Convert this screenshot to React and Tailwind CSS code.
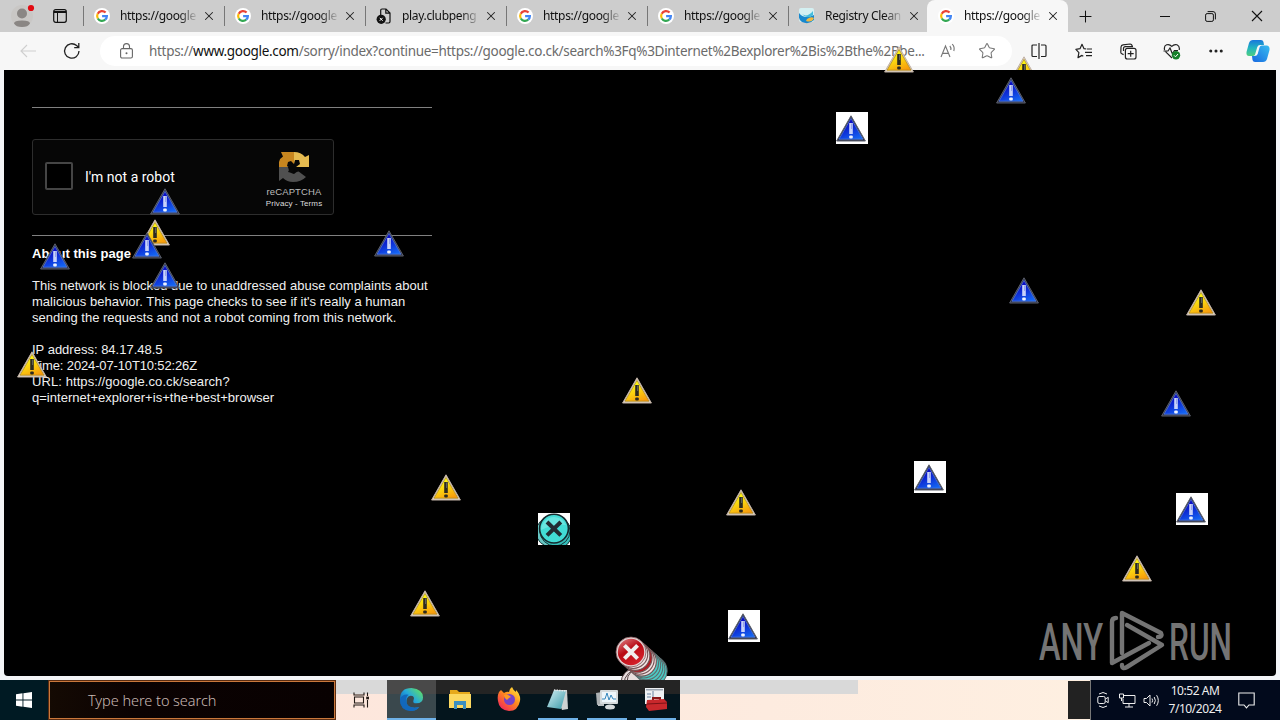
import { X, Plus, Star, Ellipsis } from 'lucide-react'

const tabs = [
  { title: 'https://google', icon: 'google' },
  { title: 'https://google', icon: 'google' },
  { title: 'play.clubpeng', icon: 'file' },
  { title: 'https://google', icon: 'google' },
  { title: 'https://google', icon: 'google' },
  { title: 'Registry Clean', icon: 'registry' },
]

// Icons dragged over the desktop, top left corner of each
const pins = [
  { kind: 'yellow', x: 884, y: 46 },
  { kind: 'blue', x: 996, y: 77 },
  { kind: 'blue', x: 150, y: 188 },
  { kind: 'yellow', x: 140, y: 219 },
  { kind: 'blue', x: 132, y: 232 },
  { kind: 'blue', x: 40, y: 243 },
  { kind: 'blue', x: 374, y: 230 },
  { kind: 'blue', x: 150, y: 262 },
  { kind: 'yellow', x: 17, y: 351 },
  { kind: 'blue', x: 1009, y: 277 },
  { kind: 'yellow', x: 1186, y: 289 },
  { kind: 'blue', x: 1161, y: 390 },
  { kind: 'yellow', x: 622, y: 377 },
  { kind: 'yellow', x: 431, y: 474 },
  { kind: 'yellow', x: 726, y: 489 },
  { kind: 'yellow', x: 410, y: 590 },
  { kind: 'yellow', x: 1122, y: 555 },
]

const boxedPins = [
  { x: 836, y: 112 },
  { x: 914, y: 461 },
  { x: 1176, y: 493 },
  { x: 728, y: 610 },
]

function Gradients() {
  return (
    <svg width="0" height="0" className="absolute">
      <defs>
        <linearGradient id="yellow" x1="0.3" y1="0" x2="0.8" y2="1">
          <stop offset="0.2" stopColor="#fdf412" />
          <stop offset="1" stopColor="#f7980c" />
        </linearGradient>
        <linearGradient id="blue" x1="0.3" y1="0" x2="0.8" y2="1">
          <stop offset="0.2" stopColor="#0a0cc4" />
          <stop offset="1" stopColor="#1468f4" />
        </linearGradient>
        <linearGradient id="red" x1="0" y1="0" x2="0.6" y2="1">
          <stop offset="0" stopColor="#e0888c" />
          <stop offset="0.5" stopColor="#b80a14" />
          <stop offset="1" stopColor="#d4202a" />
        </linearGradient>
        <linearGradient id="edge" x1="0" y1="1" x2="1" y2="0">
          <stop offset="0.2" stopColor="#0c62b8" />
          <stop offset="0.55" stopColor="#25a8dc" />
          <stop offset="0.9" stopColor="#5ddc6c" />
        </linearGradient>
        <linearGradient id="fox" x1="1" y1="0" x2="0.2" y2="1">
          <stop offset="0.1" stopColor="#ffe23a" />
          <stop offset="0.5" stopColor="#ff8a1e" />
          <stop offset="1" stopColor="#f0225e" />
        </linearGradient>
        <linearGradient id="copilotA" x1="0" y1="0" x2="0" y2="1">
          <stop offset="0" stopColor="#1877dc" />
          <stop offset="0.5" stopColor="#22b5c0" />
          <stop offset="1" stopColor="#50ce80" />
        </linearGradient>
        <linearGradient id="copilotB" x1="1" y1="0" x2="0" y2="1">
          <stop offset="0" stopColor="#38bdf0" />
          <stop offset="1" stopColor="#1868e0" />
        </linearGradient>
        <linearGradient id="pad" x1="0" y1="0" x2="1" y2="1">
          <stop offset="0" stopColor="#d6f0f4" />
          <stop offset="1" stopColor="#3899a8" />
        </linearGradient>
      </defs>
    </svg>
  )
}

function Warning({ kind }) {
  const yellow = kind === 'yellow'
  return (
    <svg width="30" height="27" viewBox="0 0 30 27" className="block">
      <path d="M15 0.8 L29.4 26 H0.6 Z" fill={yellow ? '#e0d6c8' : '#2c3048'} stroke={yellow ? '#c0b0a4' : '#5c606c'} strokeWidth="1" strokeLinejoin="round" />
      <path d="M15 3.4 L27 24.2 H3 Z" fill={yellow ? 'url(#yellow)' : 'url(#blue)'} stroke={yellow ? '#a8841c' : '#5a80dc'} strokeWidth="0.7" />
      <path d="M13.2 8 H16.8 V19 H13.2 Z" fill={yellow ? '#2c2a20' : '#c8d2fa'} />
      <path d="M15 8.5 H16.2 V14 H15 Z" fill={yellow ? '#606058' : '#94a4ec'} />
      <rect x="13.2" y="20.4" width="3.6" height="3" rx="1" fill={yellow ? '#2c2a20' : '#ecf2ff'} />
    </svg>
  )
}

function TealError() {
  return (
    <svg width="32" height="32" viewBox="0 0 32 32" className="block">
      <rect width="32" height="32" fill="#fff" />
      <g fill="#35bdb9" stroke="#173436" strokeWidth="1">
        <circle cx="19" cy="20.5" r="15" />
        <circle cx="13" cy="19" r="15" fill="#67c7c4" />
        <circle cx="17" cy="18" r="15" />
      </g>
      <circle cx="16" cy="15.6" r="14.4" fill="#42dcd5" stroke="#152a2e" strokeWidth="1.6" />
      <path d="M3 17 A13 13 0 0 1 28 12 Q15 11 3 17Z" fill="#68e5df" />
      <path d="M9 9 L22.8 22.4 M22.8 9 L9 22.4" stroke="#232b32" strokeWidth="4" />
    </svg>
  )
}

function ErrorTrail() {
  const steps = [10, 9, 8, 7, 6, 5, 4, 3, 2, 1]
  return (
    <svg width="60" height="45" viewBox="0 0 60 45" className="block">
      <g fill="#e8dede" stroke="#5a4446" strokeWidth="1">
        <circle cx="21" cy="48" r="15" />
        <circle cx="24" cy="49" r="15" />
        <circle cx="27" cy="47" r="15" />
      </g>
      {steps.map((n) => (
        <circle
          key={n}
          cx={16 + n * 2.15}
          cy={17 + n * 1.9}
          r="14.6"
          fill={n > 5 ? '#4ccac4' : n % 3 === 0 ? '#b81820' : '#efe0e0'}
          stroke={n > 5 ? '#5c6c6e' : '#715254'}
          strokeWidth="1.1"
        />
      ))}
      <circle cx="16" cy="17" r="15" fill="#e3d7d7" stroke="#7d5358" strokeWidth="0.8" />
      <circle cx="16" cy="17" r="13.2" fill="url(#red)" />
      <path d="M9.4 10.4 L22.6 23.6 M22.6 10.4 L9.4 23.6" stroke="#f0eeee" strokeWidth="4" />
    </svg>
  )
}

function GoogleIcon() {
  return (
    <svg width="16" height="16" viewBox="0 0 16 16">
      <circle cx="8" cy="8" r="8" fill="#fff" />
      <g fill="none" strokeWidth="2.2">
        <path d="M11.6 4.6 A4.9 4.9 0 0 0 3.7 5.7" stroke="#ea4335" />
        <path d="M3.7 5.7 A4.9 4.9 0 0 0 3.8 10.5" stroke="#fbbc05" />
        <path d="M3.8 10.5 A4.9 4.9 0 0 0 11.2 11.7" stroke="#34a853" />
        <path d="M11.2 11.7 A4.9 4.9 0 0 0 12.9 8.1 H8.1" stroke="#4285f4" />
      </g>
    </svg>
  )
}

function TabIcon({ icon }) {
  if (icon === 'google') return <GoogleIcon />
  if (icon === 'file') {
    return (
      <svg width="16" height="16" viewBox="0 0 16 16">
        <path d="M4.7 7 V2.2 Q4.7 1 6 1 H10 L14 5 V13.6 Q14 15 12.7 15 H9.5 M9.8 1 V5.2 H14" fill="none" stroke="#111" strokeWidth="1.2" />
        <circle cx="5.2" cy="11.3" r="4.6" fill="#111" />
        <path d="M3.7 9.8 L6.7 12.8 M6.7 9.8 L3.7 12.8" stroke="#fff" strokeWidth="1" />
      </svg>
    )
  }
  return (
    <svg width="17" height="16" viewBox="0 0 17 16">
      <rect x="0" y="0" width="15" height="14" rx="2" fill="#d4f0f2" />
      <path d="M0 5 Q5 12 15 7 V12 Q10 17 3 14 Q-1 12 0 5Z" fill="#1888ce" />
      <path d="M3 6 Q8 10 14 3 V7 Q8 12 3 6Z" fill="#44bcdc" />
      <path d="M8 11 Q12 8 15 10 Q13 15 7 13Z" fill="#f0b840" />
    </svg>
  )
}

function Tab({ title, icon, active }) {
  return (
    <div className={active ? '-ml-[3px] flex h-8 w-[141px] shrink-0 items-center rounded-t-lg bg-[#f7f7f7] pl-[11px]' : 'flex h-8 w-[141px] shrink-0 items-center pl-[10px]'}>
      <span className="flex w-[17px] shrink-0 items-center">
        <TabIcon icon={icon} />
      </span>
      <span className="ml-[9px] w-[80px] shrink-0 whitespace-nowrap text-[12px] tracking-[-0.33px] text-[#111] [mask-image:linear-gradient(to_right,#000_74%,transparent_98%)]">
        {title}
      </span>
      <X size={14} strokeWidth={1.8} className="ml-[2px] shrink-0 text-[#222]" />
      {!active && icon !== 'registry' && <span className="ml-auto h-5 w-px bg-[#777]"></span>}
    </div>
  )
}

function TabBar() {
  return (
    <div className="flex h-8 shrink-0 items-center bg-[#cdcdcd]">
      <div className="flex w-[84px] shrink-0 items-center">
        <svg width="30" height="30" viewBox="0 0 30 30" className="ml-2">
          <circle cx="14" cy="15" r="11" fill="#c9c7c5" />
          <circle cx="14" cy="12.5" r="5" fill="#8a8684" />
          <path d="M6 22.5 Q6 19.5 14 19.5 Q22 19.5 22 22.5 Q20 26 14 26 Q8 26 6 22.5Z" fill="#8a8684" />
          <circle cx="23" cy="7" r="3.1" fill="#e20a12" />
        </svg>
        <svg width="14" height="14" viewBox="0 0 14 14" className="ml-[15px]">
          <rect x="0.7" y="0.7" width="12.6" height="12.6" rx="2" fill="none" stroke="#111" strokeWidth="1.2" />
          <path d="M1 2 H13 V4 H1Z" fill="#111" />
          <path d="M4.5 4 V13" stroke="#111" />
        </svg>
        <span className="ml-auto h-5 w-px bg-[#777]"></span>
      </div>
      {tabs.map((tab, i) => (
        <Tab key={i} title={tab.title} icon={tab.icon} />
      ))}
      <Tab title="https://google" icon="google" active />
      <Plus size={19} strokeWidth={1.3} className="ml-[8px] text-[#111]" />
      <div className="ml-auto flex items-center pr-[17px] text-[#111]">
        <svg width="10" height="10" viewBox="0 0 10 10">
          <path d="M0 5.5 H10" stroke="#111" />
        </svg>
        <svg width="11" height="11" viewBox="0 0 11 11" className="ml-[35px]">
          <rect x="0.6" y="2.6" width="7.8" height="7.8" rx="1.5" fill="none" stroke="#111" />
          <path d="M2.6 0.6 H8 Q10.4 0.6 10.4 3 V8.4" fill="none" stroke="#111" />
        </svg>
        <svg width="12" height="12" viewBox="0 0 12 12" className="ml-[35px]">
          <path d="M1 1 L11 11 M11 1 L1 11" stroke="#111" strokeWidth="1.1" />
        </svg>
      </div>
    </div>
  )
}

function Toolbar() {
  return (
    <div className="flex h-[38px] shrink-0 items-center bg-[#f7f7f7]">
      <svg width="16" height="14" viewBox="0 0 16 14" className="ml-5">
        <path d="M16 7 H1 M7 1 L1 7 L7 13" fill="none" stroke="#cfcfcf" strokeWidth="1.1" />
      </svg>
      <svg width="18" height="18" viewBox="0 0 18 18" className="ml-[27px]">
        <path d="M16 9 A7.2 7.2 0 1 1 13.6 3.6 L15.6 5.4 M15.8 1 V5.6 H11.2" fill="none" stroke="#222" strokeWidth="1.3" />
      </svg>
      <div className="ml-[19px] flex h-[30px] w-[912px] shrink-0 items-center rounded-full bg-white pl-[20px]">
        <svg width="13" height="16" viewBox="0 0 13 16" className="shrink-0">
          <rect x="0.6" y="5.6" width="11.8" height="9.4" rx="1.5" fill="none" stroke="#666" strokeWidth="1.1" />
          <path d="M3.5 5.5 V3.6 A3 3 0 0 1 9.5 3.6 V5.5" fill="none" stroke="#666" strokeWidth="1.1" />
          <circle cx="6.5" cy="10.3" r="1" fill="#666" />
        </svg>
        <span className="ml-[16px] w-[778px] shrink-0 whitespace-nowrap text-[13.5px] tracking-[-0.305px] text-[#6b6b6b]">
          https://<span className="text-[#111]">www.google.com</span>/sorry/index?continue=https://google.co.ck/search%3Fq%3Dinternet%2Bexplorer%2Bis%2Bthe%2Bbe...
        </span>
        <svg width="17" height="16" viewBox="0 0 17 16" className="ml-[13px] shrink-0">
          <path d="M1 14 L5.5 3 L10 14 M2.6 10.4 H8.4" fill="none" stroke="#777" strokeWidth="1.1" />
          <path d="M9.8 3 Q11.3 4.6 10.8 7 M12.2 1.2 Q15 4 13.8 8" fill="none" stroke="#777" strokeWidth="1.1" />
        </svg>
        <Star size={18} strokeWidth={1.4} className="ml-[21px] shrink-0 text-[#777]" />
      </div>
      <svg width="16" height="16" viewBox="0 0 16 16" className="ml-[19px]">
        <path d="M6 2 H2 Q1 2 1 3 V12.5 Q1 13.5 2 13.5 H6 M10 2 H14 Q15 2 15 3 V12.5 Q15 13.5 14 13.5 H10 M8 0 V16" fill="none" stroke="#222" strokeWidth="1.2" />
      </svg>
      <svg width="18" height="17" viewBox="0 0 18 17" className="ml-[28px]">
        <path d="M11.3 6 L9 5.7 L7 1.3 L5 5.7 L0.9 6.4 L3.9 9.6 L3 14.6 L7 12.4 L8.3 13.2 M12 6 H17 M10 9.3 H17 M11 12.6 H17" fill="none" stroke="#222" strokeWidth="1.2" strokeLinejoin="round" />
      </svg>
      <svg width="17" height="17" viewBox="0 0 17 17" className="ml-[27px]">
        <rect x="5.4" y="5.4" width="10.6" height="10.6" rx="2" fill="none" stroke="#222" strokeWidth="1.2" />
        <path d="M3.6 11.6 L1.8 10.8 Q0.8 10.4 0.8 9.2 L1 4 Q1.2 2 3 1.8 L10 1 Q12 1 12.3 3.4 M3.5 8 V5.5 Q3.5 3.6 5.4 3.6 H13 M10.7 7.7 V13.7 M7.7 10.7 H13.7" fill="none" stroke="#222" strokeWidth="1.2" />
      </svg>
      <svg width="18" height="17" viewBox="0 0 18 17" className="ml-[26px]">
        <path d="M9 15 L2.5 8.6 M1.6 7 Q0.6 3 3.6 1.8 Q6.5 0.8 8.8 3.4 Q11.2 0.8 14 1.8 Q17 3.2 16.2 7 M0.5 8 H5 L7 5 L9.5 11 L11.4 7.5 H15" fill="none" stroke="#222" strokeWidth="1.2" />
        <circle cx="13" cy="12.3" r="4.2" fill="#16802a" />
        <path d="M11 12.3 L12.5 13.8 L15 11" fill="none" stroke="#fff" />
      </svg>
      <Ellipsis size={18} strokeWidth={2.1} className="ml-[26px] text-[#222]" />
      <svg width="24" height="24" viewBox="0 0 24 24" className="ml-[21px]">
        <path d="M7 1 H15 Q17 1 17.5 3 L18 6 H14 Q12 6 11.3 8 L9.5 14 Q9 17 7 17 H3 Q0 17 0.5 13 L3 4 Q4 1 7 1Z" fill="url(#copilotA)" />
        <path d="M17 23 H9 Q7 23 6.5 21 L6 17 H8.5 Q11 17 11.7 15 L13.5 8.5 Q14 6.5 16 6.5 H21 Q24 7 23.5 11 L21 20 Q20 23 17 23Z" fill="url(#copilotB)" />
      </svg>
    </div>
  )
}

function Captcha() {
  return (
    <div className="mt-[31px] flex h-[76px] w-[302px] items-center rounded-[3px] border border-[#2d2d2d] bg-[#060606] pl-3">
      <div className="mb-[3px] size-7 rounded-[2px] border-2 border-[#454545] bg-black"></div>
      <span className="ml-3 whitespace-nowrap font-[Roboto,sans-serif] text-[14px] text-white">I'm not a robot</span>
      <div className="mr-[10px] ml-auto flex w-[58px] flex-col items-center pt-[6px] font-['Liberation_Sans',sans-serif] text-[#bdbdbd]">
        <svg width="32" height="32" viewBox="0 0 32 32">
          <path d="M1 16 V11 Q2 7 5 5.5 L3 1 H16 V16Z" fill="#c8861f" />
          <path d="M16 1 Q23 1 27 6 L31 4 V16 H16Z" fill="#e6bb50" />
          <path d="M1 16 H10 Q11 22 16 23 L20 20 L28 26 Q23 31 15 31 Q9 31 5 27 L1 30Z" fill="#505050" />
          <path d="M10 11 L13 10 L16 13 L17 9 L21 9 L22 13 L18 16 L22 18 L20 21 L16 18 L14 22 L10 21 L12 17 L9 15Z" fill="#080808" />
        </svg>
        <span className="mt-[3px] text-[9.5px] leading-3 tracking-[0.15px]">reCAPTCHA</span>
        <span className="text-[8px] leading-3 whitespace-nowrap tracking-[0.1px] text-[#ddd]">Privacy - Terms</span>
      </div>
    </div>
  )
}

function Page() {
  return (
    <div className="h-[610px] shrink-0 bg-[#f3f5f7] px-1 pb-1">
      <main className="h-full rounded-b-sm bg-black pt-[37px] pl-7 font-['Liberation_Sans',Arial,sans-serif] text-[13px] leading-4 whitespace-nowrap text-[#f0f0f0]">
        <div className="h-px w-[400px] bg-[#808080]"></div>
        <Captcha />
        <div className="mt-5 h-px w-[400px] bg-[#808080]"></div>
        <p className="mt-[10px] font-bold tracking-[0.05px] text-white">About this page</p>
        <div className="mt-4 tracking-[0.015px]">
          <p>This network is blocked due to unaddressed abuse complaints about</p>
          <p>malicious behavior. This page checks to see if it's really a human</p>
          <p>sending the requests and not a robot coming from this network.</p>
        </div>
        <div className="mt-4">
          <p>IP address: 84.17.48.5</p>
          <p className="tracking-[-0.14px]">Time: 2024-07-10T10:52:26Z</p>
          <p className="tracking-[0.08px]">URL: https://google.co.ck/search?</p>
          <p className="tracking-[0.02px]">q=internet+explorer+is+the+best+browser</p>
        </div>
      </main>
    </div>
  )
}

function Watermark() {
  return (
    <svg width="204" height="64" viewBox="0 0 204 64" className="absolute top-[609px] left-[1039px]">
      <g fill="#747474" fontFamily="Roboto, sans-serif" fontSize="52.5" fontWeight="500">
        <text x="0" y="51" textLength="64" lengthAdjust="spacingAndGlyphs">ANY</text>
        <text x="130" y="51" textLength="63" lengthAdjust="spacingAndGlyphs">RUN</text>
      </g>
      <g fill="none" stroke="#747474" strokeWidth="4.4" strokeLinecap="round" strokeLinejoin="round">
        <path d="M77 9 Q73 9 73 13 V54 L110 34" />
        <path d="M83 44 V4 L122 24 Q124 28 119 28" />
        <path d="M83 56 Q83 61 88 58 L123 36 L88 16" />
      </g>
    </svg>
  )
}

function TaskIcon({ name }) {
  if (name === 'edge') {
    return (
      <svg width="25" height="25" viewBox="0 0 26 26">
        <path d="M1 13 Q1 1 13 1 Q25 2 25 11 Q25 17 18 17 Q14 17 15 14 Q17 9 12 9 Q7 10 8 17 Q10 23 21 21 Q17 25 12 25 Q1 24 1 13Z" fill="url(#edge)" />
        <path d="M1 13 Q3 7 10 8 Q6 11 8 17 Q10 23 21 21 Q17 25 12 25 Q1 24 1 13Z" fill="#1268bd" />
      </svg>
    )
  }
  if (name === 'explorer') {
    return (
      <svg width="24" height="22" viewBox="0 0 24 22">
        <path d="M2 2 H9 L11 4 H22 V19 H2Z" fill="#e6a91c" />
        <path d="M1 6 H23 V20 H1Z" fill="#fcd860" />
        <path d="M6 13 H18 V21 H15 V17 H9 V21 H6Z" fill="#3c8fc0" />
      </svg>
    )
  }
  if (name === 'firefox') {
    return (
      <svg width="26" height="26" viewBox="0 0 26 26">
        <path d="M3 6 L5 4 L8 7 Q11 5 13 6 Q13 3 16 1 Q17 4 20 6 L20 4 Q25 9 24 15 Q22 25 13 25 Q3 24 2 15 Q1 10 3 6Z" fill="url(#fox)" />
        <circle cx="13.5" cy="13.5" r="5.5" fill="#7542c9" />
        <path d="M8 9 Q12 8 15 11 Q12 12 11 14 Q8 12 8 9Z" fill="#ff9a22" />
      </svg>
    )
  }
  if (name === 'notepad') {
    return (
      <svg width="24" height="24" viewBox="0 0 24 24">
        <path d="M8 3 L21 3 L22 22 L16 23Z" fill="#ced2d2" />
        <path d="M8 3 L20 4 L15 22 L1 20Z" fill="url(#pad)" />
        <path d="M8 3 L20 4" stroke="#e8e8e8" strokeWidth="1.5" strokeDasharray="1.5 1" />
      </svg>
    )
  }
  if (name === 'monitor') {
    return (
      <svg width="24" height="24" viewBox="0 0 24 24">
        <path d="M1 6 L7 5 V17 L2 18Z" fill="#adb1b3" />
        <rect x="5" y="3" width="18" height="14" rx="1" fill="#d5dadc" />
        <rect x="7" y="5" width="14" height="10" fill="#edf6fb" />
        <path d="M7 12 H10 L12 6 L14 13 L16 8 L18 12 H21" fill="none" stroke="#3686bc" />
        <ellipse cx="15" cy="20" rx="5" ry="2.5" fill="#d5dadc" />
        <path d="M3 18 H9" stroke="#bcc0c2" strokeWidth="2" />
      </svg>
    )
  }
  return (
    <svg width="24" height="24" viewBox="0 0 24 24">
      <rect x="1" y="1" width="19" height="16" fill="#eef0f2" />
      <path d="M2 2 H19 V3.5 H2Z" fill="#9aa4b0" />
      <path d="M3 7 H7 M3 10 H7 M9 4 V14" stroke="#6882a0" />
      <path d="M9 13 V11 H16 V13" fill="none" stroke="#8a1818" strokeWidth="2" />
      <path d="M3 13 L20 12 L23 15 V22 L5 24 L2 20Z" fill="#c8282c" />
      <path d="M3 17 L23 16" stroke="#7c1216" />
    </svg>
  )
}

const tasks = [
  { name: 'edge', active: true },
  { name: 'explorer' },
  { name: 'firefox' },
  { name: 'notepad', open: true },
  { name: 'monitor', open: true },
  { name: 'toolbox', open: true },
]

function Taskbar() {
  return (
    <div className="relative z-10 flex h-10 shrink-0 bg-[linear-gradient(to_right,#fde3da,#fdebdf_60%,#fff2e2)]">
      <div className="flex w-[48px] items-center bg-[#001a23] pl-4">
        <svg width="16" height="16" viewBox="0 0 16 16" fill="#fff">
          <path d="M0 2.2 L6.5 1.3 V7.5 H0Z M7.4 1.2 L16 0 V7.5 H7.4Z M0 8.4 H6.5 V14.7 L0 13.8Z M7.4 8.4 H16 V16 L7.4 14.8Z" />
        </svg>
      </div>
      <div className="flex w-[288px] items-center border border-[#5c2c10] bg-[linear-gradient(to_right,#140a03,#0b0202_30%,#080101)] pl-[39px] text-[14.5px] text-[#c9b9b4] outline outline-1 -outline-offset-2 outline-[#c9783c]">
        <span className="mt-px font-light tracking-[-0.05px] whitespace-nowrap">Type here to search</span>
      </div>
      <div className="flex w-[51px] items-center justify-center bg-[linear-gradient(#d9d9d9_14px,transparent_14px)]">
        <svg width="17" height="16" viewBox="0 0 17 16" fill="none" stroke="#201814" strokeWidth="1.1">
          <path d="M1 0.5 V3 H11 V0.5 M1 15.5 V13 H11 V15.5 M1.5 5 H10.5 V11 H1.5Z M14.5 0.5 V4 M14.5 8 V15.5" />
          <rect x="13.8" y="5.2" width="1.6" height="1.6" fill="#201814" />
        </svg>
      </div>
      <div className="flex w-[293px] bg-[linear-gradient(#242424_14px,#04151d_14px)]">
        {tasks.map((task) => (
          <div key={task.name} className={task.active ? 'flex w-[49px] flex-col items-center bg-[linear-gradient(#494949_14px,#3a484d_14px)]' : 'flex w-[49px] flex-col items-center'}>
            <div className="flex h-[38px] items-center">
              <TaskIcon name={task.name} />
            </div>
            {task.active && <div className="h-0.5 w-full bg-[#6fb2e8]"></div>}
            {task.open && <div className="h-0.5 w-10 bg-[#6fb2e8]"></div>}
          </div>
        ))}
      </div>
      <div className="h-[14px] w-[178px] bg-[#d9d9d9]"></div>
      <div className="my-px ml-auto w-[22px] bg-[#222]"></div>
      <div className="flex w-[190px] items-center border-l border-[#777] bg-[#020a1c] pl-[6px] text-[#eee]">
        <svg width="12" height="18" viewBox="0 0 12 18" fill="none" stroke="#eee">
          <path d="M2 3 Q6 0 10 3 M2 15 Q6 18 10 15" />
          <rect x="0.8" y="5.5" width="7.4" height="7" rx="1.5" />
          <path d="M8.5 8 L11.2 6.3 V11.7 L8.5 10" />
        </svg>
        <svg width="17" height="15" viewBox="0 0 17 15" fill="none" stroke="#eee" className="ml-[10px]">
          <path d="M5 2.5 H16 V10.5 H4 V6 M10 10.5 V14 M6 14 H14" />
          <path d="M0.5 1 H4.5 V5 H0.5Z M2.5 5 V8" />
        </svg>
        <svg width="17" height="15" viewBox="0 0 17 15" fill="none" stroke="#eee" className="ml-[7px]">
          <path d="M1 5.5 H3.5 L7 2 V13 L3.5 9.5 H1Z M9 5.5 Q10.3 7.5 9 9.5 M11.2 4 Q13.5 7.5 11.2 11 M13.6 2.2 Q17 7.5 13.6 12.8" />
        </svg>
        <div className="ml-[8px] w-[54px] text-center text-[12px] leading-[18px] tracking-[-0.45px] whitespace-nowrap">
          <div>10:52 AM</div>
          <div>7/10/2024</div>
        </div>
        <svg width="17" height="17" viewBox="0 0 17 17" fill="none" stroke="#eee" strokeWidth="1.1" className="ml-[16px]">
          <path d="M0.8 1 H16.2 V13 H11 L8.5 15.8 L6 13 H0.8Z" />
        </svg>
      </div>
    </div>
  )
}

export default function App() {
  return (
    <div className="relative flex h-[720px] w-[1280px] flex-col overflow-hidden bg-white font-['Noto_Sans','Open_Sans',sans-serif]">
      <Gradients />
      <TabBar />
      <Toolbar />
      <Page />
      <Taskbar />
      <Watermark />
      {/* cut off by the top edge of the page */}
      <div className="absolute top-14 left-[1009px] h-[14px] overflow-hidden">
        <Warning kind="yellow" />
      </div>
      {pins.map((pin, i) => (
        <div key={i} className="absolute" style={{ left: pin.x, top: pin.y }}>
          <Warning kind={pin.kind} />
        </div>
      ))}
      {boxedPins.map((pin, i) => (
        <div key={i} className="absolute size-8 bg-white pt-[3px]" style={{ left: pin.x, top: pin.y }}>
          <Warning kind="blue" />
        </div>
      ))}
      <div className="absolute top-[513px] left-[538px]">
        <TealError />
      </div>
      <div className="absolute top-[635px] left-[615px]">
        <ErrorTrail />
      </div>
    </div>
  )
}
